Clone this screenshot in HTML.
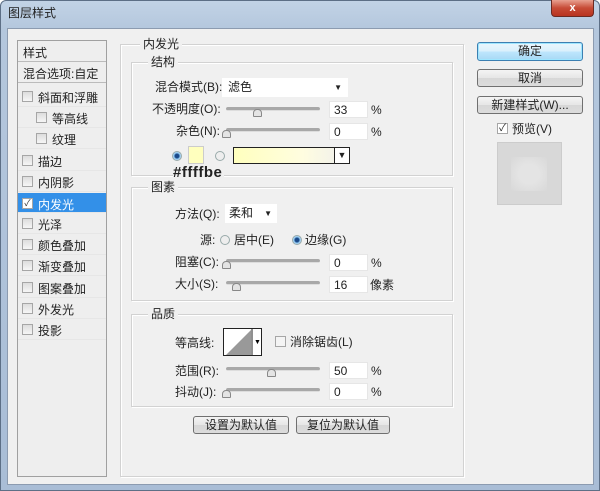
<!DOCTYPE html>
<html><head><meta charset="utf-8"><style>
*{box-sizing:border-box;margin:0;padding:0}
body{width:600px;height:491px;overflow:hidden;background:#fff;font-family:"Liberation Sans","Noto Sans CJK SC",sans-serif;font-size:12px;color:#222;position:relative}
.a{position:absolute}
.win{left:0;top:0;width:600px;height:491px;background:linear-gradient(180deg,#c2d3e6 0,#b4c7dd 28px,#a9bdd6 100%);border:1px solid #5d6f86;border-radius:6px 6px 0 0}
.body{left:7px;top:28px;width:587px;height:457px;background:#f0f0f0;border:1px solid #8c9bb0}
.t{white-space:nowrap;line-height:14px}
.grp{border:1px solid #d2d2d2;box-shadow:inset 1px 1px 0 #fff,1px 1px 0 #fff}
.lbl{background:#f0f0f0;padding:0 3px}
.inp{background:#fff;border:1px solid #e6e6e6;height:17px;padding-left:4px;line-height:16px}
.track{height:4px;background:#a8a8a8;border-radius:2px;border-bottom:1px solid #ddd}
.thumb{width:9px;height:8px;background:#e4e4e4;border:1px solid #888;border-radius:4px 4px 1px 1px}
.cb{width:11px;height:11px;border:1px solid #a6a6a6;background:linear-gradient(#ddd,#f6f6f6)}
.btn{border:1px solid #707070;border-radius:3px;background:linear-gradient(#f4f4f4 0,#e6e6e6 50%,#d7d7d7 51%,#dcdcdc);text-align:center;line-height:16px}
.row{left:18px;width:88px;height:21px;border-bottom:1px solid #e6e6e6}
.row .cb{position:absolute;left:4px;top:5px}
.row span{position:absolute;left:20px;top:3px;white-space:nowrap}
.radio{width:10px;height:10px;border-radius:50%;border:1px solid #9aa;background:#eee}
</style></head><body>
<div class="a win"></div>
<div class="a t" style="left:8px;top:6px;font-size:12px">图层样式</div>
<div class="a" style="left:551px;top:0;width:43px;height:17px;border:1px solid #6b2a22;border-top:0;border-radius:0 0 4px 4px;background:linear-gradient(#e8a090,#c74b36 50%,#b83420);color:#fff;text-align:center;font-weight:bold;font-size:11px;line-height:16px">x</div>
<div class="a body"></div>

<div class="a" style="left:17px;top:40px;width:90px;height:437px;border:1px solid #a0a0a0;background:#eeeeee"></div>
<div class="a row" style="top:41px;border-bottom:1px solid #bbb"><span style="left:5px">样式</span></div>
<div class="a row" style="top:62px;border-bottom:1px solid #bbb"><span style="left:5px">混合选项:自定</span></div>
<div class="a row" style="top:86px"><div class="cb"></div><span>斜面和浮雕</span></div>
<div class="a row" style="top:107px"><div class="cb" style="left:18px"></div><span style="left:34px">等高线</span></div>
<div class="a row" style="top:128px"><div class="cb" style="left:18px"></div><span style="left:34px">纹理</span></div>
<div class="a row" style="top:150px"><div class="cb"></div><span>描边</span></div>
<div class="a row" style="top:171px"><div class="cb"></div><span>内阴影</span></div>
<div class="a row" style="top:193px;background:#3390e8;color:#fff;height:20px"><div class="cb" style="background:#fff;font-size:9px;color:#333;line-height:9px;text-align:center">✓</div><span>内发光</span></div>
<div class="a row" style="top:213px"><div class="cb"></div><span>光泽</span></div>
<div class="a row" style="top:234px"><div class="cb"></div><span>颜色叠加</span></div>
<div class="a row" style="top:255px"><div class="cb"></div><span>渐变叠加</span></div>
<div class="a row" style="top:277px"><div class="cb"></div><span>图案叠加</span></div>
<div class="a row" style="top:298px"><div class="cb"></div><span>外发光</span></div>
<div class="a row" style="top:319px"><div class="cb"></div><span>投影</span></div>

<div class="a grp" style="left:120px;top:44px;width:344px;height:433px"></div>
<div class="a t lbl" style="left:140px;top:37px">内发光</div>

<div class="a grp" style="left:131px;top:62px;width:322px;height:114px"></div>
<div class="a t lbl" style="left:148px;top:55px">结构</div>
<div class="a t" style="left:155px;top:80px">混合模式(B):</div>
<div class="a inp" style="left:222px;top:78px;width:126px;height:19px;border:0;padding-left:6px;line-height:19px">滤色<span style="position:absolute;right:6px;font-size:8px">▼</span></div>
<div class="a t" style="left:152px;top:102px">不透明度(O):</div>
<div class="a track" style="left:226px;top:107px;width:94px"></div>
<div class="a thumb" style="left:253px;top:109px"></div>
<div class="a inp" style="left:329px;top:101px;width:39px">33</div>
<div class="a t" style="left:371px;top:103px">%</div>
<div class="a t" style="left:176px;top:124px">杂色(N):</div>
<div class="a track" style="left:226px;top:128px;width:94px"></div>
<div class="a thumb" style="left:222px;top:130px"></div>
<div class="a inp" style="left:329px;top:123px;width:39px">0</div>
<div class="a t" style="left:371px;top:125px">%</div>
<div class="a radio" style="left:172px;top:151px;background:radial-gradient(#1b4a8a 2px,#8cc4ee 3px,#ddeeff 5px)"></div>
<div class="a" style="left:188px;top:146px;width:16px;height:18px;background:#ffffbe;border:1px solid #ccc"></div>
<div class="a radio" style="left:215px;top:151px"></div>
<div class="a" style="left:233px;top:147px;width:117px;height:17px;border:1px solid #222;background:linear-gradient(90deg,#ffffbe,#fffde0 60%,#eee);"></div>
<div class="a" style="left:334px;top:147px;width:16px;height:17px;border:1px solid #222;background:#fff;font-size:9px;text-align:center;line-height:15px">▼</div>
<div class="a t" style="left:173px;top:165px;font-weight:bold;font-size:15px;letter-spacing:0.5px;line-height:16px;background:#f0f0f0;padding-right:2px">#ffffbe</div>

<div class="a grp" style="left:131px;top:187px;width:322px;height:114px"></div>
<div class="a t lbl" style="left:148px;top:180px">图素</div>
<div class="a t" style="left:175px;top:207px">方法(Q):</div>
<div class="a inp" style="left:225px;top:204px;width:52px;height:19px;border:0;line-height:19px">柔和<span style="position:absolute;right:5px;font-size:8px">▼</span></div>
<div class="a t" style="left:200px;top:233px">源:</div>
<div class="a radio" style="left:220px;top:235px"></div>
<div class="a t" style="left:234px;top:233px">居中(E)</div>
<div class="a radio" style="left:292px;top:235px;background:radial-gradient(#1b4a8a 2px,#8cc4ee 3px,#ddeeff 5px)"></div>
<div class="a t" style="left:305px;top:233px">边缘(G)</div>
<div class="a t" style="left:175px;top:255px">阻塞(C):</div>
<div class="a track" style="left:226px;top:259px;width:94px"></div>
<div class="a thumb" style="left:222px;top:261px"></div>
<div class="a inp" style="left:329px;top:254px;width:39px">0</div>
<div class="a t" style="left:371px;top:256px">%</div>
<div class="a t" style="left:175px;top:277px">大小(S):</div>
<div class="a track" style="left:226px;top:281px;width:94px"></div>
<div class="a thumb" style="left:232px;top:283px"></div>
<div class="a inp" style="left:329px;top:276px;width:39px">16</div>
<div class="a t" style="left:370px;top:278px">像素</div>

<div class="a grp" style="left:131px;top:314px;width:322px;height:93px"></div>
<div class="a t lbl" style="left:148px;top:307px">品质</div>
<div class="a t" style="left:175px;top:336px">等高线:</div>
<div class="a" style="left:223px;top:328px;width:39px;height:28px;border:1px solid #222;background:#fff;overflow:hidden">
<svg width="39" height="28" style="position:absolute;left:0;top:0"><polygon points="1,27 27,1 27,27" fill="#999"/><line x1="28" y1="0" x2="28" y2="28" stroke="#222"/><text x="30" y="15" font-size="7">▼</text></svg></div>
<div class="a cb" style="left:275px;top:336px;background:#f4f4f4"></div>
<div class="a t" style="left:290px;top:335px">消除锯齿(L)</div>
<div class="a t" style="left:175px;top:364px">范围(R):</div>
<div class="a track" style="left:226px;top:367px;width:94px"></div>
<div class="a thumb" style="left:267px;top:369px"></div>
<div class="a inp" style="left:329px;top:362px;width:39px">50</div>
<div class="a t" style="left:371px;top:364px">%</div>
<div class="a t" style="left:175px;top:385px">抖动(J):</div>
<div class="a track" style="left:226px;top:388px;width:94px"></div>
<div class="a thumb" style="left:222px;top:390px"></div>
<div class="a inp" style="left:329px;top:383px;width:39px">0</div>
<div class="a t" style="left:371px;top:385px">%</div>

<div class="a btn" style="left:193px;top:416px;width:96px;height:18px">设置为默认值</div>
<div class="a btn" style="left:296px;top:416px;width:94px;height:18px">复位为默认值</div>

<div class="a btn" style="left:477px;top:42px;width:106px;height:19px;border-color:#3c7fb1;box-shadow:inset 0 0 0 1px #9ee6ff;background:linear-gradient(#eaf6fd,#d9f0fc 50%,#bee6fd 51%,#a7d9f5)">确定</div>
<div class="a btn" style="left:477px;top:69px;width:106px;height:18px">取消</div>
<div class="a btn" style="left:477px;top:96px;width:106px;height:18px">新建样式(W)...</div>
<div class="a cb" style="left:497px;top:123px;background:#fff;font-size:10px;line-height:9px;text-align:center">✓</div>
<div class="a t" style="left:512px;top:122px">预览(V)</div>
<div class="a" style="left:497px;top:142px;width:65px;height:63px;background:#d8d8d8;border:1px solid #ccc"></div>
<div class="a" style="left:511px;top:157px;width:36px;height:34px;background:radial-gradient(#e4e4e4 40%,#d8d8d8)"></div>
</body></html>
